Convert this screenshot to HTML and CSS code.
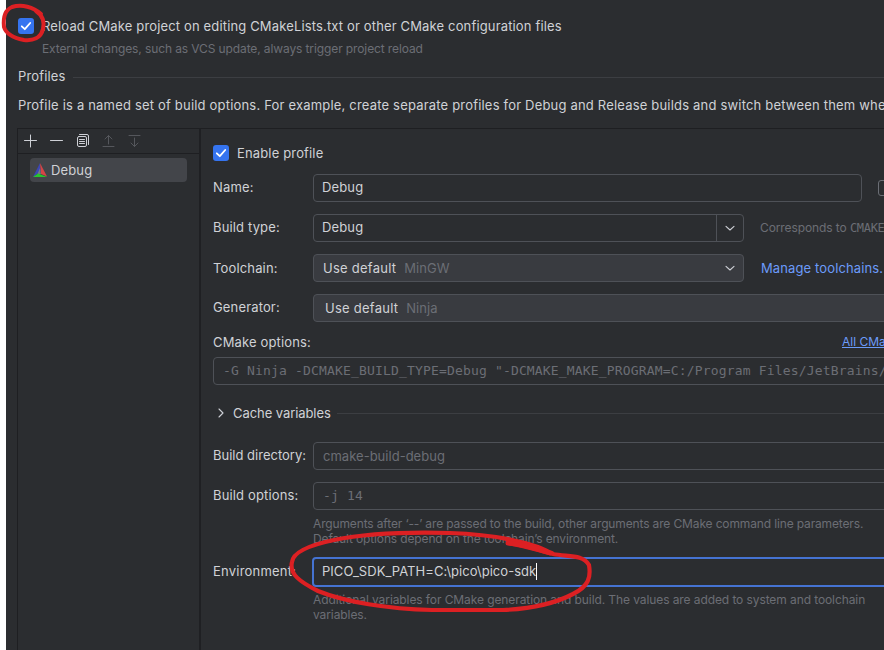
FILE: index.html
```html
<!DOCTYPE html>
<html lang="en">
<head>
<meta charset="utf-8">
<title>CMake settings</title>
<link rel="stylesheet" href="styles.css">
</head>
<body>
<main class="settings">
  <label class="reload"><svg class="check" viewBox="0 0 16 16"><path d="M3.800 8.300 6.800 11.200 12.200 5"/></svg><span class="reload-text">Reload CMake project on editing CMakeLists.txt or other CMake configuration files</span></label>
  <p class="reload-hint">External changes, such as VCS update, always trigger project reload</p>
  <h2 class="section"><span>Profiles</span></h2>
  <p class="description">Profile is a named set of build options. For example, create separate profiles for Debug and Release builds and switch between them whe</p>
  <div class="panel">
    <aside class="profiles">
      <div class="toolbar">
        <svg viewBox="0 0 16 16"><path d="M7.500 2v12M1.500 7.500h12"/></svg>
        <svg viewBox="0 0 16 16"><path d="M1.500 7.500h12"/></svg>
        <svg viewBox="0 0 16 16"><path d="M4.500 1.500h7.500a1.500 1.500 0 0 1 1.500 1.500v8.500"/><rect x="2.500" y="3.500" width="9" height="10" rx="1.500"/><path d="M4.500 6.500h5M4.500 8.500h5M4.500 10.500h5"/></svg>
        <svg class="disabled" viewBox="0 0 16 16"><path d="M7.500 11V2.500M4 6 7.500 2.500 11 6M2 13.500h11"/></svg>
        <svg class="disabled" viewBox="0 0 16 16"><path d="M7.500 5v8.500M4 10l3.500 3.500L11 10M2 2.500h11"/></svg>
      </div>
      <div class="profile">
        <svg viewBox="0 0 14 14"><path fill="#3c46b4" d="M7 0 0 14 7.500 8.500z"/><path fill="#d54545" d="M7 0 14 13.500 8.100 11z"/><path fill="#777985" d="M7 5 7.800 11 4.500 11z"/><path fill="#27c52d" d="M0 14 5 10.500 14 14z"/></svg>
        <span>Debug</span>
      </div>
    </aside>
    <section class="form">
      <label class="enable"><svg class="check" viewBox="0 0 16 16"><path d="M3.800 8.300 6.800 11.200 12.200 5"/></svg><span>Enable profile</span></label>
      <div class="row"><span class="label">Name:</span><div class="field name">Debug</div><span class="share"></span></div>
      <div class="row"><span class="label">Build type:</span><div class="field combo editable"><span class="value">Debug</span><span class="arrow"><svg viewBox="0 0 16 16"><path d="M4 6.300 8 10l4-3.700"/></svg></span></div><span class="note">Corresponds to <code>CMAKE</code></span></div>
      <div class="row"><span class="label centered">Toolchain:</span><div class="field combo filled"><span>Use default</span><span class="secondary">MinGW</span><span class="arrow"><svg viewBox="0 0 16 16"><path d="M4 6.300 8 10l4-3.700"/></svg></span></div><a class="manage">Manage toolchains.</a></div>
      <div class="row"><span class="label">Generator:</span><div class="field wide filled generator"><span>Use default</span><span class="secondary">Ninja</span></div></div>
      <div class="options-head"><span>CMake options:</span><a class="docs">All CMa</a></div>
      <div class="field mono cmake-options">-G Ninja -DCMAKE_BUILD_TYPE=Debug "-DCMAKE_MAKE_PROGRAM=C:/Program Files/JetBrains/</div>
      <h3 class="cache"><svg viewBox="0 0 16 16"><path d="m6 4 4 4-4 4"/></svg><span>Cache variables</span></h3>
      <div class="row"><span class="label tight">Build directory:</span><div class="field wide placeholder">cmake-build-debug</div></div>
      <div class="row"><span class="label">Build options:</span><div class="field wide mono">-j 14</div></div>
      <p class="hint options-hint">Arguments after ‘--’ are passed to the build, other arguments are CMake command line parameters.<br>Default options depend on the toolchain’s environment.</p>
      <div class="row env"><span class="label">Environment:</span><div class="field wide focused">PICO_SDK_PATH=C:\pico\pico-sdk<i class="caret"></i></div></div>
      <p class="hint env-hint">Additional variables for CMake generation and build. The values are added to system and toolchain<br>variables.</p>
    </section>
  </div>
  <svg class="markup" viewBox="0 0 884 650">
    <path d="M41 14C33 7 22 4 12 7C5 10 3 18 4 27C6 34 14 38 24 40C33 41 41 38 43 29C45 20 42 15 36 11" stroke-width="4"/>
    <path d="M508 543C527 546 540 551 553 554C568 557 583 554 589 565C591 577 589 586 573 594C552 605 526 609 503 610H432C388 609 345 602 318 591C300 582 289 574 292 562C293 552 310 545 334 540C368 533 413 532 450 533C480 534 512 538 538 547C544 549 548 552 552 553" stroke-width="4.200"/>
    <path d="M508 543C520 544 535 548 550 553" stroke-width="5"/>
  </svg>
</main>
</body>
</html>
```

FILE: styles.css
```css
* { box-sizing: border-box; }
body {
  margin: 0;
  width: 884px;
  height: 650px;
  overflow: hidden;
  background: #fff;
  color: #d0d2d6;
  font: 13px/16px Inter, "Liberation Sans", sans-serif;
  letter-spacing: .15px;
}
h2, h3, p { margin: 0; font: inherit; }
svg { flex: none; fill: none; stroke-linecap: round; stroke-linejoin: round; }
.settings {
  height: 650px;
  margin-left: 6px;
  padding: 18px 0 0 12px;
  overflow: hidden;
  white-space: nowrap;
  background: #2b2d30;
}
.check { width: 16px; height: 16px; border-radius: 3px; background: #3574f0; stroke: #fff; stroke-width: 1.8; }
.reload, .enable { display: flex; align-items: center; gap: 8px; height: 16px; }
.reload-hint { margin: 7px 0 0 24px; color: #6b6e75; font-size: 12px; letter-spacing: -.11px; }
.section { display: flex; align-items: center; gap: 7px; margin-top: 11px; }
.section::after, .cache::after { content: ""; flex: 1; height: 1px; background: #3c3e42; margin-top: 1px; }
.section::after { margin-top: 2px; }
.description { margin-top: 13px; letter-spacing: .19px; }
.panel { display: flex; height: 530px; margin: 15px 0 0 -1px; border: 1px solid #1e1f22; border-right: 0; }
.profiles { width: 183px; flex: none; border-right: 2px solid #1f2023; }
.toolbar { display: flex; align-items: center; gap: 10px; height: 25px; padding-left: 5px; border-bottom: 1px solid #1e1f22; }
.toolbar svg { width: 16px; height: 16px; stroke: #ced0d6; stroke-width: 1; }
.toolbar .disabled { stroke: #55575c; }
.profile { display: flex; align-items: center; gap: 4px; width: 157px; height: 24px; margin: 4px 0 0 12px; padding-left: 3px; border-radius: 4px; background: #43454a; }
.profile svg { width: 14px; height: 14px; }
.form { width: 690px; flex: none; padding: 16px 0 0 12px; }
.enable { margin-bottom: 13px; }
.row { display: flex; align-items: center; height: 28px; margin-bottom: 12px; }
.label { width: 100px; flex: none; padding-bottom: 2px; }
.label.centered { padding-bottom: 0; }
.tight { letter-spacing: 0; }
.field { display: flex; flex: none; align-items: center; height: 28px; padding-left: 8px; border: 1px solid #4e5157; border-radius: 4px; }
.name { width: 549px; padding-bottom: 2px; }
.value { padding-bottom: 2px; }
.share { flex: none; width: 16px; height: 16px; margin-left: 16px; border: 1px solid #6b6e75; border-radius: 3px; }
.combo { width: 431px; }
.arrow { display: flex; align-items: center; justify-content: center; width: 27px; height: 26px; margin-left: auto; }
.arrow svg { width: 16px; height: 16px; stroke: #ced0d6; stroke-width: 1.1; }
.editable .arrow { border-left: 1px solid #4e5157; }
.filled { padding-left: 9px; background: #393b40; letter-spacing: .25px; }
.generator { padding-left: 11px; }
.secondary { margin-left: 8px; color: #6b6e75; letter-spacing: .05px; }
.note { margin-left: 16px; color: #6b6e75; font-size: 12px; letter-spacing: -.1px; }
.note code { font: 12px "DejaVu Sans Mono", monospace; letter-spacing: -.3px; }
.manage { margin-left: 17px; color: #6b9bfa; letter-spacing: .12px; }
.wide { width: 590px; }
.options-head { display: flex; justify-content: space-between; width: 629px; height: 16px; }
.docs { width: 0; color: #6b9bfa; font-size: 12px; letter-spacing: 0; text-decoration: underline; }
.cmake-options { width: 690px; margin-top: 7px; }
.mono, .placeholder { padding-left: 9px; color: #6b6e75; }
.placeholder { letter-spacing: .02px; }
.mono { padding-bottom: 2px; font: 13px "DejaVu Sans Mono", monospace; letter-spacing: .17px; }
.cache { display: flex; align-items: center; height: 16px; margin: 20px 0 21px; letter-spacing: -.07px; }
.cache svg { width: 16px; height: 16px; margin-right: 4px; stroke: #ced0d6; stroke-width: 1.1; }
.cache span { margin-right: 6px; }
.hint { margin-left: 100px; color: #6b6e75; font-size: 12px; line-height: 15px; letter-spacing: -.09px; }
.options-hint { margin-top: -6px; letter-spacing: -.14px; }
.env { margin: 12px 0 6px; }
.focused { width: 591px; height: 30px; margin-left: -1px; padding-bottom: 2px; border: 2px solid #4573d2; letter-spacing: .04px; }
.caret { width: 1px; height: 17px; background: #fff; }
.env .label { letter-spacing: .22px; }
.markup { position: absolute; left: 0; top: 0; width: 884px; height: 650px; stroke: #dc2023; pointer-events: none; }
```
